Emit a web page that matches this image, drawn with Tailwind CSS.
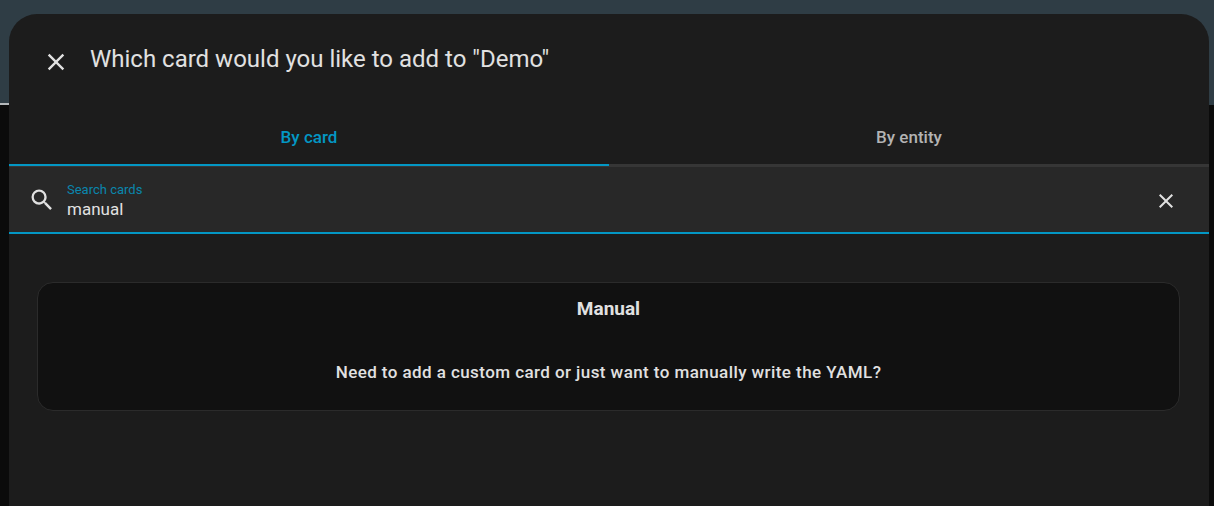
<!DOCTYPE html>
<html lang="en">
<head>
<meta charset="utf-8">
<title>Add card</title>
<script src="https://cdn.jsdelivr.net/npm/@tailwindcss/browser@4"></script>
</head>
<body class="relative min-h-screen flex flex-col bg-[#0b0b0b] pt-[14px] pl-[9px] pr-[5px] font-[Roboto,sans-serif] text-[#e1e1e1]">
<div class="absolute inset-x-0 top-0 h-[105px] bg-[#2f3d45]"><div class="absolute bottom-0 left-0 h-[2px] w-1/2 bg-[#b4b8ba]"></div></div>
<main role="dialog" aria-labelledby="title" class="relative grow rounded-t-[28px] bg-[#1c1c1c]">
  <header class="flex items-center h-[90px] pl-[33px] gap-5">
    <button aria-label="Close" class="mt-[6px]"><svg class="size-7" viewBox="0 0 24 24" fill="currentColor"><path d="M19,6.41L17.59,5L12,10.59L6.41,5L5,6.41L10.59,12L5,17.59L6.41,19L12,13.41L17.59,19L19,17.59L13.41,12L19,6.41Z"/></svg></button>
    <h1 id="title" class="text-2xl">Which card would you like to add to "Demo"</h1>
  </header>
  <div role="tablist" class="grid grid-cols-2 border-b border-[#363636] text-[17px] font-medium">
    <button role="tab" aria-selected="true" class="h-[62px] pt-2 border-b-2 border-[#0397c4] text-[#0397c4]">By card</button>
    <button role="tab" aria-selected="false" class="h-[62px] pt-2 border-b-2 border-[#363636] text-[#b3b3b3]">By entity</button>
  </div>
  <div class="flex items-center h-[67px] border-b-2 border-[#0397c4] bg-[#282828] pl-[19px] pr-[31px]">
    <svg class="size-7" viewBox="0 0 24 24" fill="currentColor"><path d="M9.5,3A6.5,6.5 0 0,1 16,9.5C16,11.11 15.41,12.59 14.44,13.73L14.71,14H15.5L20.5,19L19,20.5L14,15.5V14.71L13.73,14.44C12.59,15.41 11.11,16 9.5,16A6.5,6.5 0 0,1 3,9.5A6.5,6.5 0 0,1 9.5,3M9.5,5C7,5 5,7 5,9.5C5,12 7,14 9.5,14C12,14 14,12 14,9.5C14,7 12,5 9.5,5Z"/></svg>
    <div class="flex flex-col grow pl-[11px] pt-1">
      <label for="search" class="text-[13px] leading-4 text-[#0a86ad]">Search cards</label>
      <input id="search" type="text" value="manual" class="w-full h-6 text-[17px] outline-none">
    </div>
    <button aria-label="Clear" class="mt-[2px]"><svg class="size-6" viewBox="0 0 24 24" fill="currentColor"><path d="M19,6.41L17.59,5L12,10.59L6.41,5L5,6.41L10.59,12L5,17.59L6.41,19L12,13.41L17.59,19L19,17.59L13.41,12L19,6.41Z"/></svg></button>
  </div>
  <button class="flex flex-col items-center mt-12 mx-7 w-[calc(100%-57px)] h-[129px] pt-3 rounded-2xl border border-[#2b2b2b] bg-[#111111]">
    <span class="text-[19px] leading-7 font-bold">Manual</span>
    <span class="mt-9 text-[17px] leading-[26px] font-medium tracking-wide">Need to add a custom card or just want to manually write the YAML?</span>
  </button>
</main>
</body>
</html>
